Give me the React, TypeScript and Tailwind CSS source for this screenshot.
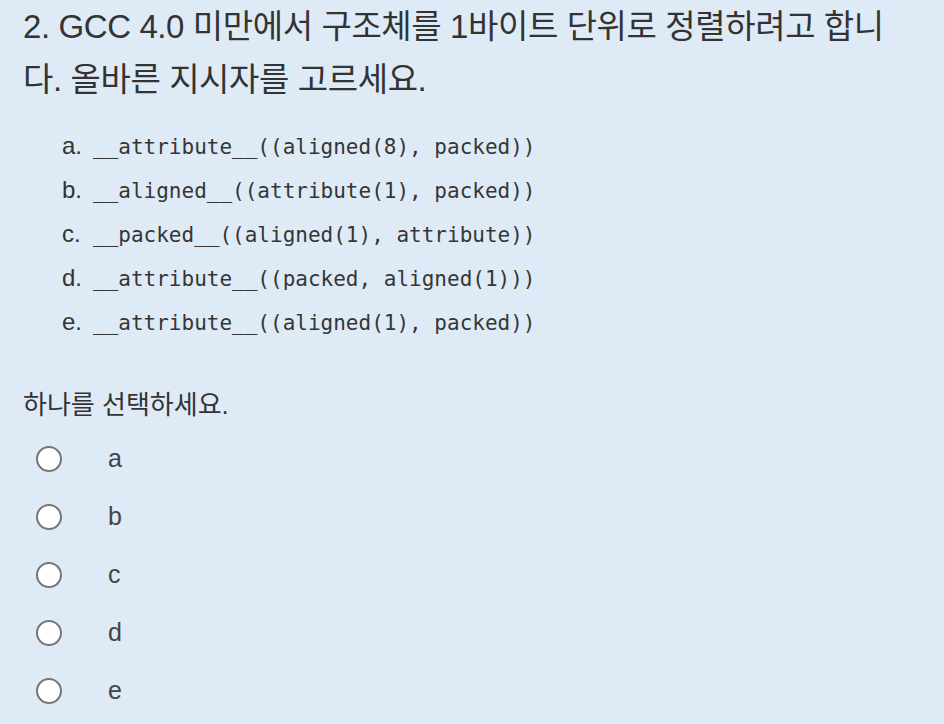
import React from 'react';

const sans = 'font-["Liberation_Sans","Noto_Sans_CJK_KR",sans-serif]';

const options = [
  { key: 'a', code: '__attribute__((aligned(8), packed))' },
  { key: 'b', code: '__aligned__((attribute(1), packed))' },
  { key: 'c', code: '__packed__((aligned(1), attribute))' },
  { key: 'd', code: '__attribute__((packed, aligned(1)))' },
  { key: 'e', code: '__attribute__((aligned(1), packed))' },
];

const App: React.FC = () => {
  return (
    <div className={`w-[944px] h-[724px] overflow-hidden bg-[#deebf7] text-[#333333] pl-[23px] ${sans}`}>
      <h2 className="text-[33px] leading-[53px] font-normal tracking-[-0.4px]">
        2. GCC 4.0 미만에서 구조체를 1바이트 단위로 정렬하려고 합니
        <br />
        다. 올바른 지시자를 고르세요.
      </h2>

      <div className="mt-[19px] ml-[39px] flex flex-col">
        {options.map((o) => (
          <div key={o.key} className="h-[44px] flex items-baseline pt-[3px]">
            <span className="text-[24px] w-[31px]">{o.key}.</span>
            <span className='text-[21px] font-["DejaVu_Sans_Mono","Noto_Sans_CJK_KR",monospace] text-[#363636]'>
              {o.code}
            </span>
          </div>
        ))}
      </div>

      <p className="mt-[38px] h-[44px] flex items-center text-[26px]">하나를 선택하세요.</p>

      <div className="mt-[3px] flex flex-col">
        {options.map((o) => (
          <label key={o.key} className="h-[58px] flex items-center ml-[13px]">
            <span className="w-[26px] h-[26px] rounded-full border-2 border-[#767676] bg-white" />
            <span className="ml-[46px] text-[25px] text-[#444444]">{o.key}</span>
          </label>
        ))}
      </div>
    </div>
  );
};

export default App;
